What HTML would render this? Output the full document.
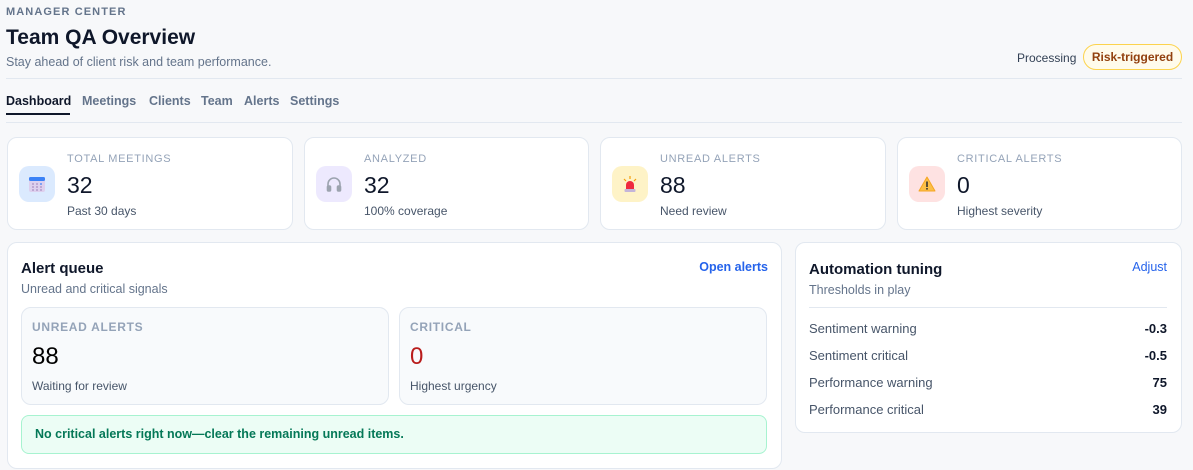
<!DOCTYPE html>
<html><head><meta charset="utf-8"><style>
*{box-sizing:border-box;margin:0;padding:0}
body{width:1193px;height:470px;background:#f7f8fa;font-family:"Liberation Sans",sans-serif;color:#0f172a;position:relative;overflow:hidden}
.a{position:absolute;white-space:nowrap}
.card{position:absolute;background:#fff;border:1px solid #e2e8f0;border-radius:10px}
.lbl{font-size:11px;letter-spacing:.7px;color:#94a3b8;text-transform:uppercase}
.ic{position:absolute;width:36px;height:36px;border-radius:10px;left:11px;top:28px;display:flex;align-items:center;justify-content:center}
.big{font-size:23px;color:#0f172a}
.sm{font-size:12px;color:#475569}
.tab{font-size:12.5px;font-weight:bold;color:#64748b}
.row{position:absolute;left:14px;right:14px;font-size:13px;color:#475569}
.row b{position:absolute;right:0;color:#0f172a}
</style></head><body>
<div class="a" style="left:6px;top:6px;font-size:11px;letter-spacing:1.1px;color:#64748b;font-weight:bold">MANAGER CENTER</div>
<div class="a" style="left:6px;top:26px;font-size:21px;font-weight:bold;color:#0f172a">Team QA Overview</div>
<div class="a" style="left:6px;top:55px;font-size:12.5px;color:#64748b">Stay ahead of client risk and team performance.</div>
<div class="a" style="left:6px;top:78px;width:1176px;height:1px;background:#e2e8f0"></div>
<div class="a" style="left:1017px;top:51px;font-size:12px;color:#334155">Processing</div>
<div class="a" style="left:1083px;top:44px;width:99px;height:26px;border:1px solid #fcd34d;background:#fffbeb;border-radius:13px;font-size:12px;font-weight:bold;color:#92400e;text-align:center;line-height:24px">Risk-triggered</div>
<div class="a tab" style="left:6px;top:94px;color:#0f172a">Dashboard</div>
<div class="a" style="left:6px;top:113px;width:64px;height:2px;background:#0f172a"></div>
<div class="a tab" style="left:82px;top:94px">Meetings</div>
<div class="a tab" style="left:149px;top:94px">Clients</div>
<div class="a tab" style="left:201px;top:94px">Team</div>
<div class="a tab" style="left:244px;top:94px">Alerts</div>
<div class="a tab" style="left:290px;top:94px">Settings</div>
<div class="a" style="left:6px;top:122px;width:1176px;height:1px;background:#e2e8f0"></div>

<div class="card" style="left:7px;top:137px;width:286px;height:93px">
<div class="ic" style="background:#dbeafe"><svg width="18" height="18" viewBox="0 0 18 18"><rect x="1" y="2" width="16" height="15" rx="2" fill="#ddd0ee"/><rect x="1" y="2" width="16" height="4" rx="1.5" fill="#3b82f6"/><g fill="#a78bbf"><circle cx="5" cy="9" r=".9"/><circle cx="9" cy="9" r=".9"/><circle cx="5" cy="12" r=".9"/><circle cx="9" cy="12" r=".9"/><circle cx="13" cy="12" r=".9"/><circle cx="5" cy="15" r=".9"/><circle cx="9" cy="15" r=".9"/><circle cx="13" cy="15" r=".9"/></g><circle cx="13" cy="9" r=".9" fill="#3b82f6"/></svg></div>
<div class="a lbl" style="left:59px;top:15px">Total Meetings</div>
<div class="a big" style="left:59px;top:34px">32</div>
<div class="a sm" style="left:59px;top:66px">Past 30 days</div></div>

<div class="card" style="left:304px;top:137px;width:285px;height:93px">
<div class="ic" style="background:#ede9fe"><svg width="18" height="18" viewBox="0 0 18 18" fill="none" stroke="#9ca3af" stroke-width="1.6"><path d="M3 12V9a6 6 0 0112 0v3"/><rect x="2.5" y="11" width="3" height="5" rx="1" fill="#9ca3af"/><rect x="12.5" y="11" width="3" height="5" rx="1" fill="#9ca3af"/></svg></div>
<div class="a lbl" style="left:59px;top:15px">Analyzed</div>
<div class="a big" style="left:59px;top:34px">32</div>
<div class="a sm" style="left:59px;top:66px">100% coverage</div></div>

<div class="card" style="left:600px;top:137px;width:286px;height:93px">
<div class="ic" style="background:#fef3c7"><svg width="18" height="18" viewBox="0 0 18 18"><path d="M5 14V10a4 4 0 018 0v4z" fill="#ef2a3f"/><rect x="3.5" y="14" width="11" height="3" rx="1" fill="#c4b5d9"/><g stroke="#f59e0b" stroke-width="1.2"><path d="M9 1v3M3 4l2 2M15 4l-2 2"/></g></svg></div>
<div class="a lbl" style="left:59px;top:15px">Unread Alerts</div>
<div class="a big" style="left:59px;top:34px">88</div>
<div class="a sm" style="left:59px;top:66px">Need review</div></div>

<div class="card" style="left:897px;top:137px;width:285px;height:93px">
<div class="ic" style="background:#fee2e2"><svg width="18" height="18" viewBox="0 0 18 18"><path d="M9 2L17 16H1z" fill="#fbbf48" stroke="#f5a623" stroke-linejoin="round"/><rect x="8.2" y="6.5" width="1.6" height="5.5" fill="#333"/><rect x="8.2" y="13" width="1.6" height="1.6" fill="#333"/></svg></div>
<div class="a lbl" style="left:59px;top:15px">Critical Alerts</div>
<div class="a big" style="left:59px;top:34px">0</div>
<div class="a sm" style="left:59px;top:66px">Highest severity</div></div>

<div class="card" style="left:7px;top:242px;width:775px;height:227px">
<div class="a" style="left:13px;top:17px;font-size:15px;font-weight:bold">Alert queue</div>
<div class="a" style="left:13px;top:39px;font-size:12.5px;color:#64748b">Unread and critical signals</div>
<div class="a" style="right:13px;top:17px;font-size:12.5px;font-weight:bold;color:#2563eb">Open alerts</div>
<div class="card" style="left:13px;top:64px;width:368px;height:98px;background:#f8fafc">
<div class="a lbl" style="left:10px;top:12px;font-weight:bold;font-size:12px">Unread Alerts</div>
<div class="a" style="left:10px;top:35px;font-size:24px;color:#000">88</div>
<div class="a sm" style="left:10px;top:71px">Waiting for review</div></div>
<div class="card" style="left:391px;top:64px;width:368px;height:98px;background:#f8fafc">
<div class="a lbl" style="left:10px;top:12px;font-weight:bold;font-size:12px">Critical</div>
<div class="a" style="left:10px;top:35px;font-size:24px;color:#b91c1c">0</div>
<div class="a sm" style="left:10px;top:71px">Highest urgency</div></div>
<div class="a" style="left:13px;top:172px;width:746px;height:39px;background:#ecfdf5;border:1px solid #a7f3d0;border-radius:8px;font-size:12.5px;font-weight:bold;color:#047857;line-height:37px;padding-left:13px">No critical alerts right now—clear the remaining unread items.</div>
</div>

<div class="card" style="left:795px;top:242px;width:387px;height:191px">
<div class="a" style="left:13px;top:18px;font-size:15px;font-weight:bold">Automation tuning</div>
<div class="a" style="left:13px;top:40px;font-size:12.5px;color:#64748b">Thresholds in play</div>
<div class="a" style="right:14px;top:17px;font-size:12.5px;color:#2563eb">Adjust</div>
<div class="a" style="left:13px;right:14px;top:64px;height:1px;background:#e2e8f0"></div>
<div class="row" style="top:78px;left:13px">Sentiment warning<b>-0.3</b></div>
<div class="row" style="top:105px;left:13px">Sentiment critical<b>-0.5</b></div>
<div class="row" style="top:132px;left:13px">Performance warning<b>75</b></div>
<div class="row" style="top:159px;left:13px">Performance critical<b>39</b></div>
</div>
</body></html>
